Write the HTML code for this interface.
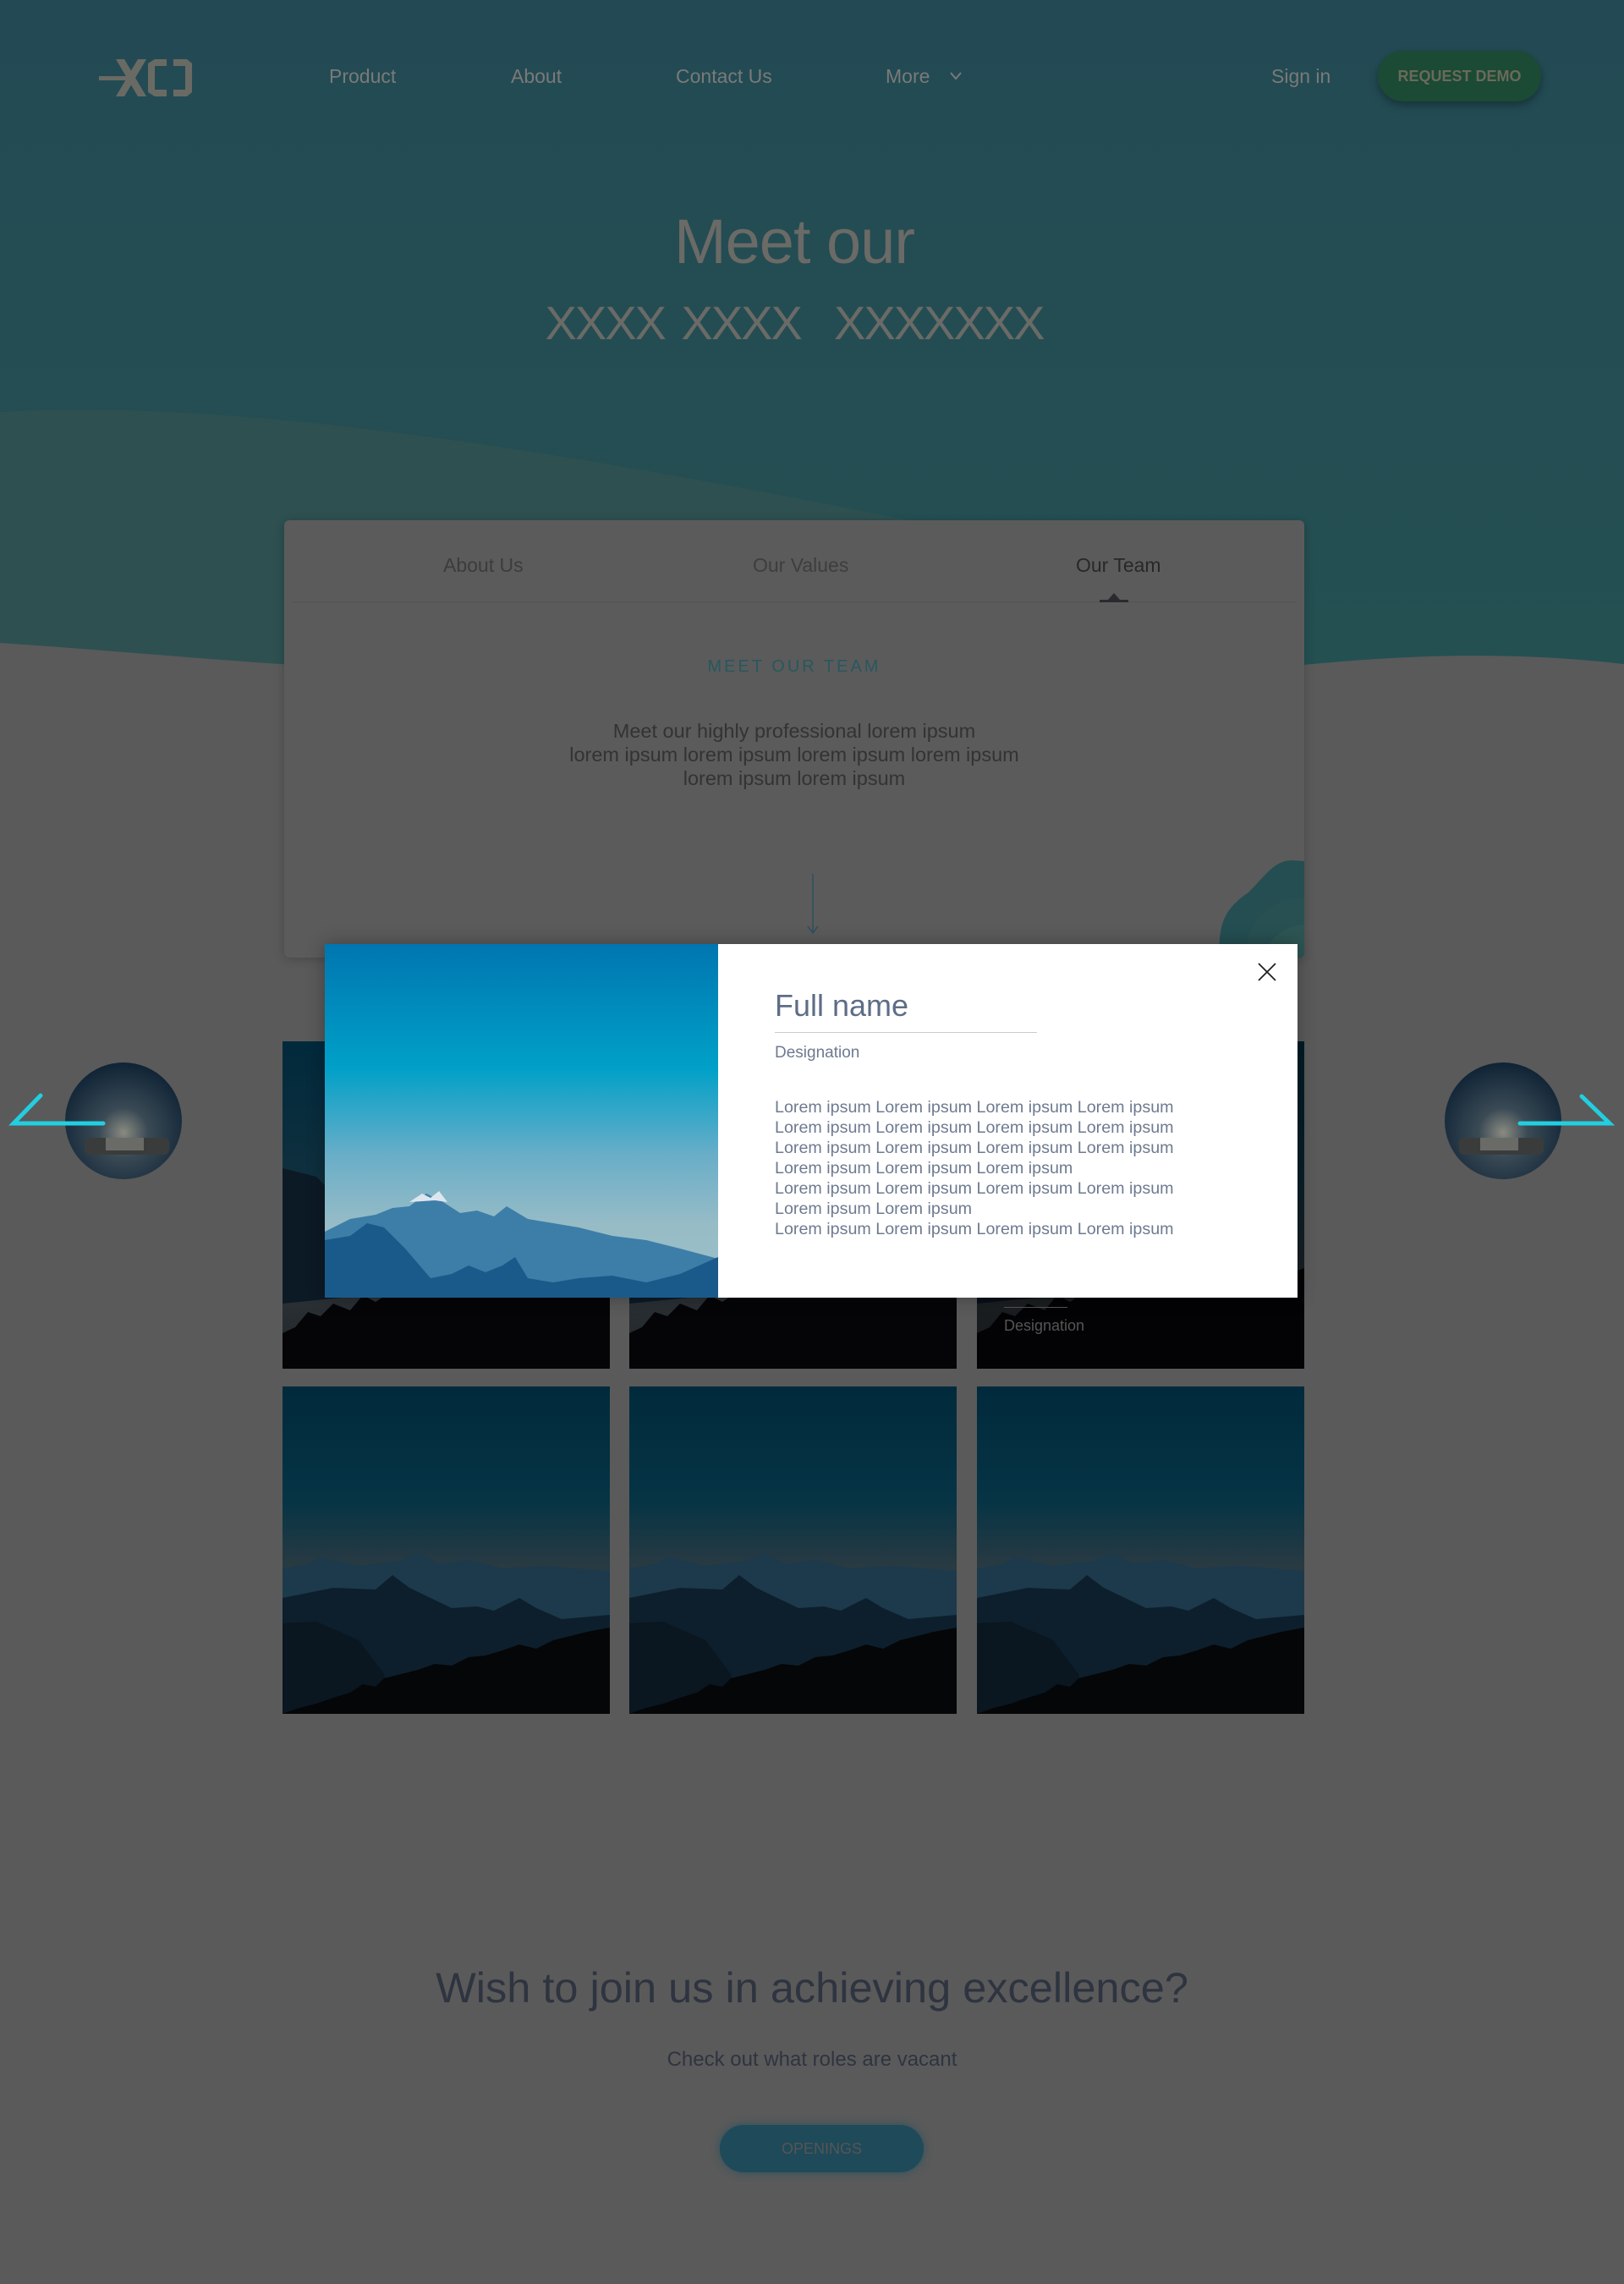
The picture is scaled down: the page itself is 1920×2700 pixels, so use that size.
<!DOCTYPE html>
<html><head><meta charset="utf-8">
<style>
*{margin:0;padding:0;box-sizing:border-box}
body{width:1920px;height:2700px;background:#5a5a5a;font-family:"Liberation Sans",sans-serif;position:relative;overflow:hidden}
.abs{position:absolute}
.nav{color:#7a7a78;font-size:23px;top:77px}
.tile{position:absolute;width:387px;height:387px;overflow:hidden}
.lor{font-size:19.7px;color:#6e7a90;line-height:24px}
</style></head><body>
<svg class="abs" style="left:0;top:0" width="1920" height="800">
<defs><linearGradient id="hg" x1="0" y1="0" x2="0" y2="1"><stop offset="0" stop-color="#234a54"/><stop offset="1" stop-color="#245052"/></linearGradient></defs>
<rect width="1920" height="800" fill="#5a5a5a"/>
<path d="M0 0H1920V785C1750 765 1600 780 1500 790L420 790C250 780 100 760 0 765Z" fill="url(#hg)"/>
<path d="M0 487C300 470 700 540 1100 620L1100 800L0 800Z" fill="#2e5050"/>
<path d="M0 760C150 770 300 785 420 790L0 800Z" fill="#5a5a5a"/>
<rect x="0" y="790" width="1920" height="10" fill="#5a5a5a"/>
</svg>
<svg class="abs" style="left:117px;top:67px" width="130" height="50" viewBox="0 0 130 50">
<g fill="#6a6a64">
<polygon points="0,28 36,28 36,23 0,23"/>
<polygon points="20,3 30,3 56,47 46,47"/>
<polygon points="46,3 56,3 30,47 20,47"/>
<polygon points="58,8 66,3 80,3 80,11 66,11 66,39 80,39 80,47 66,47 58,42"/>
<polygon points="88,3 88,11 102,11 102,39 88,39 88,47 104,47 110,42 110,8 104,3"/>
</g></svg>
<div class="abs nav" style="left:389px">Product</div>
<div class="abs nav" style="left:604px">About</div>
<div class="abs nav" style="left:799px">Contact Us</div>
<div class="abs nav" style="left:1047px">More</div>
<svg class="abs" style="left:1122px;top:84px" width="16" height="12"><path d="M2 2L8 9L14 2" stroke="#7a7a78" stroke-width="2" fill="none"/></svg>
<div class="abs nav" style="left:1503px">Sign in</div>
<div class="abs" style="left:1629px;top:60px;width:193px;height:60px;border-radius:30px;background:#1b4a35;box-shadow:0 4px 10px rgba(0,0,0,.35);color:#6a6a5a;font-weight:bold;font-size:18px;text-align:center;line-height:60px">REQUEST DEMO</div>
<div class="abs" style="left:0;width:1878px;top:243px;text-align:center;font-size:74px;color:#6a6a66;letter-spacing:-1px">Meet our</div>
<div class="abs" style="left:0;width:1878px;top:349px;text-align:center;font-size:56px;color:#6a6a66;letter-spacing:-2px;word-spacing:6px">XXXX XXXX &nbsp;XXXXXXX</div>
<div class="abs" style="left:336px;top:615px;width:1206px;height:517px;background:#5b5b5b;border-radius:6px;box-shadow:0 2px 12px rgba(0,0,0,.2);overflow:hidden">
<div class="abs" style="left:188px;top:40px;font-size:23px;color:#3c3c3c">About Us</div>
<div class="abs" style="left:554px;top:40px;font-size:23px;color:#3e3e3e">Our Values</div>
<div class="abs" style="left:936px;top:40px;font-size:23px;color:#282828">Our Team</div>
<div class="abs" style="left:10px;top:96px;width:1186px;height:1px;background:#525252"></div>
<svg class="abs" style="left:964px;top:86px" width="34" height="12"><polygon points="17,0 24,8 34,8 34,11 0,11 0,8 10,8" fill="#2a2a30"/></svg>
<div class="abs" style="left:0;width:1206px;top:162px;text-align:center;font-size:20px;letter-spacing:3px;color:#28585e">MEET OUR TEAM</div>
<div class="abs" style="left:0;width:1206px;top:235px;text-align:center;font-size:23.5px;line-height:28px;color:#333">Meet our highly professional lorem ipsum<br>lorem ipsum lorem ipsum lorem ipsum lorem ipsum<br>lorem ipsum lorem ipsum</div>
<svg class="abs" style="left:617px;top:418px" width="16" height="72"><path d="M8 0V70M2 62L8 70L14 62" stroke="#2d5060" stroke-width="1.5" fill="none"/></svg>
<svg class="abs" style="left:1100px;top:400px" width="106" height="117"><path d="M6 117C4 80 10 60 40 40C60 20 70 3 90 2L106 3V117Z" fill="#244e52"/><path d="M38 117C35 85 50 65 80 50L106 45V117Z" fill="#285052"/><path d="M62 117C62 95 80 80 106 78V117Z" fill="#2d5553"/></svg>
</div>
<svg width="0" height="0" style="position:absolute"><defs>
<linearGradient id="sky" x1="0" y1="0" x2="0" y2="1"><stop offset="0" stop-color="#012a3c"/><stop offset=".35" stop-color="#063445"/><stop offset=".58" stop-color="#2e3b42"/><stop offset="1" stop-color="#2a3338"/></linearGradient>
<linearGradient id="sky2" x1="0" y1="0" x2="0" y2="1"><stop offset="0" stop-color="#012a3c"/><stop offset=".45" stop-color="#10303e"/><stop offset=".75" stop-color="#2c3236"/><stop offset="1" stop-color="#202428"/></linearGradient>
<g id="mt">
<rect width="387" height="387" fill="url(#sky)"/>
<path d="M0 215L30 210L45 202L90 212L140 206L160 197L185 210L220 205L260 215L310 212L387 218V387H0Z" fill="#1c3a4c"/>
<path d="M0 250L60 238L110 240L130 223L150 238L200 262L230 260L250 265L280 250L300 262L330 275L387 270V387H0Z" fill="#0d1f2c"/>
<path d="M0 280L40 278L90 300L120 340L130 387H0Z" fill="#0a1620"/>
<path d="M0 387L20 380L40 375L60 368L80 362L95 352L110 355L120 345L140 340L160 335L180 328L200 330L220 320L240 318L260 312L280 305L300 310L320 300L340 295L360 290L387 285V387Z" fill="#050608"/>
</g>
<g id="mt2">
<rect width="387" height="387" fill="url(#sky2)"/>
<path d="M0 150L40 160L70 190L110 230L130 270L100 300L0 310Z" fill="#0c1a26"/>
<path d="M0 387V345L15 338L30 320L45 325L60 310L80 318L95 300L110 308L130 295L145 300L160 290L180 298L200 285L215 292L235 280L250 288L270 278L285 285L300 275L320 282L340 270L360 278L387 268V387Z" fill="#050508"/>
</g>
</defs></svg>
<svg class="tile" style="left:334px;top:1231px" viewBox="0 0 387 387"><use href="#mt2"/></svg>
<svg class="tile" style="left:744px;top:1231px" viewBox="0 0 387 387"><use href="#mt2"/></svg>
<svg class="tile" style="left:1155px;top:1231px" viewBox="0 0 387 387"><use href="#mt2"/><rect width="387" height="387" fill="#000" opacity=".35"/></svg>
<div class="abs" style="left:1187px;top:1545px;width:75px;height:1px;background:#555"></div>
<div class="abs" style="left:1187px;top:1557px;font-size:18px;color:#555">Designation</div>
<svg class="tile" style="left:334px;top:1639px" viewBox="0 0 387 387"><use href="#mt"/></svg>
<svg class="tile" style="left:744px;top:1639px" viewBox="0 0 387 387"><use href="#mt"/></svg>
<svg class="tile" style="left:1155px;top:1639px" viewBox="0 0 387 387"><use href="#mt"/></svg>
<svg class="abs" style="left:0;top:1240px" width="260" height="170">
<defs><radialGradient id="car" cx=".5" cy=".6" r=".6"><stop offset="0" stop-color="#8a8a80"/><stop offset=".35" stop-color="#3a4a55"/><stop offset="1" stop-color="#0f2335"/></radialGradient></defs>
<circle cx="146" cy="85" r="69" fill="url(#car)"/>
<rect x="100" y="105" width="100" height="20" rx="6" fill="#3a3c3c"/>
<rect x="125" y="105" width="45" height="15" fill="#6a6a66"/>
<path d="M48 55L16 88H122" stroke="#22cfe0" stroke-width="5" fill="none" stroke-linecap="round"/>
</svg>
<svg class="abs" style="left:1660px;top:1240px" width="260" height="170">
<circle cx="117" cy="85" r="69" fill="url(#car)"/>
<rect x="65" y="105" width="100" height="20" rx="6" fill="#3a3c3c"/>
<rect x="90" y="105" width="45" height="15" fill="#6a6a66"/>
<path d="M210 56L243 88H137" stroke="#22cfe0" stroke-width="5" fill="none" stroke-linecap="round"/>
</svg>
<div class="abs" style="left:384px;top:1116px;width:1150px;height:418px;background:#fff;box-shadow:0 0 20px rgba(0,0,0,.3)">
<svg class="abs" style="left:0;top:0" width="465" height="418">
<defs><linearGradient id="ms" x1="0" y1="0" x2="0" y2="1"><stop offset="0" stop-color="#0076b0"/><stop offset=".35" stop-color="#00a0c8"/><stop offset=".6" stop-color="#6aaec8"/><stop offset=".8" stop-color="#98bcc6"/><stop offset="1" stop-color="#9cc0c8"/></linearGradient></defs>
<rect width="465" height="418" fill="url(#ms)"/>
<path d="M0 340L30 325L60 320L80 312L100 310L120 295L140 305L160 318L180 315L200 322L215 310L240 325L270 330L300 335L340 345L380 350L420 360L465 372V418H0Z" fill="#3c7ea8"/>
<path d="M0 350L30 345L50 330L70 335L95 360L125 395L150 390L170 380L190 388L210 380L225 370L240 395L270 400L300 395L340 392L380 400L420 390L465 370V418H0Z" fill="#1a5a8a"/>
<path d="M100 305L115 295L125 300L135 292L145 305L130 303Z" fill="#dde6ee"/>
</svg>
<div class="abs" style="left:532px;top:52px;font-size:36px;color:#5e6d86">Full name</div>
<div class="abs" style="left:532px;top:104px;width:310px;height:1px;background:#c8ccd2"></div>
<div class="abs" style="left:532px;top:118px;font-size:19px;color:#6e7a90">Designation</div>
<div class="abs lor" style="left:532px;top:181px">Lorem ipsum Lorem ipsum Lorem ipsum Lorem ipsum<br>Lorem ipsum Lorem ipsum Lorem ipsum Lorem ipsum<br>Lorem ipsum Lorem ipsum Lorem ipsum Lorem ipsum<br>Lorem ipsum Lorem ipsum Lorem ipsum<br>Lorem ipsum Lorem ipsum Lorem ipsum Lorem ipsum<br>Lorem ipsum Lorem ipsum<br>Lorem ipsum Lorem ipsum Lorem ipsum Lorem ipsum</div>
<svg class="abs" style="left:1102px;top:21px" width="24" height="24"><path d="M2 2L22 22M22 2L2 22" stroke="#222" stroke-width="1.8"/></svg>
</div>
<div class="abs" style="left:0;width:1920px;top:2320px;text-align:center;font-size:50.5px;color:#2e3440">Wish to join us in achieving excellence?</div>
<div class="abs" style="left:0;width:1920px;top:2421px;text-align:center;font-size:24px;color:#2e3440">Check out what roles are vacant</div>
<div class="abs" style="left:851px;top:2512px;width:241px;height:56px;border-radius:28px;background:#1f4a5a;box-shadow:0 0 10px rgba(30,80,95,.8);color:#555;font-size:18px;text-align:center;line-height:56px">OPENINGS</div>
</body></html>
